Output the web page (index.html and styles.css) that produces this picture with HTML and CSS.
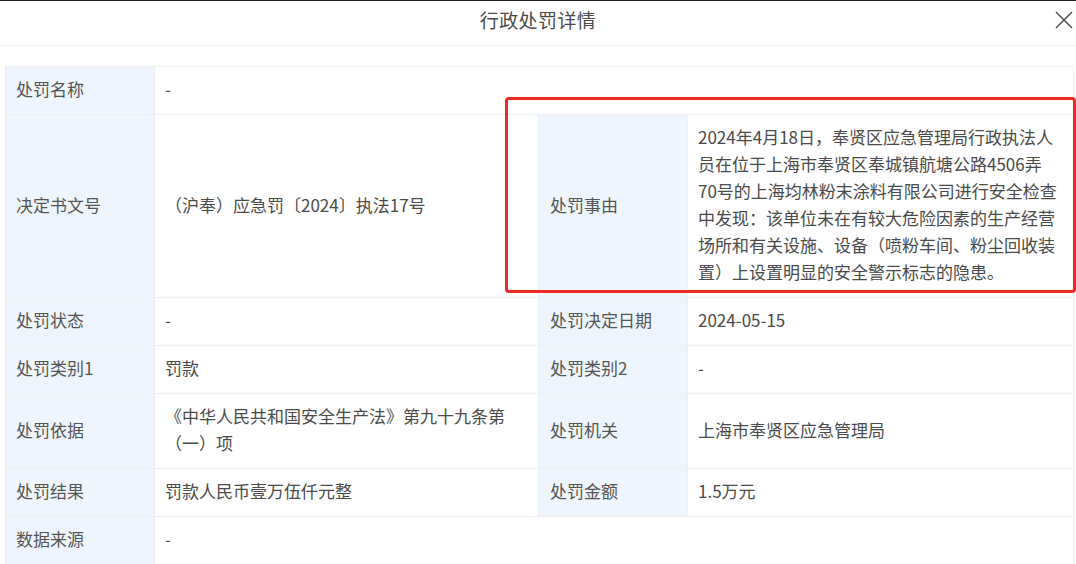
FILE: index.html
```html
<!DOCTYPE html>
<html lang="zh-CN">
<head>
  <meta charset="UTF-8" />
  <title>行政处罚详情</title>
  <meta name="viewport" content="width=device-width, initial-scale=1" />
  <link rel="stylesheet" href="styles.css">
</head>
<body>

  <div class="dialog" role="dialog" aria-label="行政处罚详情">
    <header class="dialog-header">
      <h2 class="dialog-title">行政处罚详情</h2>
      <button class="dialog-close" type="button" aria-label="关闭">
        <svg width="18" height="18" viewBox="0 0 18 18" aria-hidden="true">
          <path d="M1 1 L17 17 M17 1 L1 17" stroke="#555" stroke-width="1.6" fill="none" />
        </svg>
      </button>
    </header>

    <main class="dialog-body">
      <table class="detail">
        <colgroup>
          <col class="col-label" />
          <col class="col-value" />
          <col class="col-label" />
          <col class="col-value-wide" />
        </colgroup>
        <tbody>
          <tr>
            <th>处罚名称</th>
            <td colspan="3">-</td>
          </tr>
          <tr>
            <th>决定书文号</th>
            <td>（沪奉）应急罚〔2024〕执法17号</td>
            <th class="th-right">处罚事由</th>
            <td class="td-reason">2024年4月18日，奉贤区应急管理局行政执法人员在位于上海市奉贤区奉城镇航塘公路4506弄70号的上海均林粉末涂料有限公司进行安全检查中发现：该单位未在有较大危险因素的生产经营场所和有关设施、设备（喷粉车间、粉尘回收装置）上设置明显的安全警示标志的隐患。</td>
          </tr>
          <tr>
            <th>处罚状态</th>
            <td>-</td>
            <th class="th-right">处罚决定日期</th>
            <td>2024-05-15</td>
          </tr>
          <tr>
            <th>处罚类别1</th>
            <td>罚款</td>
            <th class="th-right">处罚类别2</th>
            <td>-</td>
          </tr>
          <tr>
            <th>处罚依据</th>
            <td>《中华人民共和国安全生产法》第九十九条第（一）项</td>
            <th class="th-right">处罚机关</th>
            <td>上海市奉贤区应急管理局</td>
          </tr>
          <tr>
            <th>处罚结果</th>
            <td>罚款人民币壹万伍仟元整</td>
            <th class="th-right">处罚金额</th>
            <td>1.5万元</td>
          </tr>
          <tr>
            <th>数据来源</th>
            <td colspan="3">-</td>
          </tr>
        </tbody>
      </table>

      <!-- 标注框 -->
      <div class="highlight" aria-hidden="true"></div>
    </main>
  </div>

</body>
</html>
```

FILE: styles.css
```css
/* Reset básico */
* {
  box-sizing: border-box;
  margin: 0;
  padding: 0;
  font-family: "Noto Sans CJK SC", "Noto Sans", sans-serif;
}

body {
  width: 1076px;
  height: 564px;
  overflow: hidden;
  background: #fff;
  color: #444;
  border-top: 1px solid #222;
}

/* Cabecera */
.dialog-header {
  height: 45px;
  border-bottom: 1px solid #eeeff2;
  display: flex;
  align-items: center;
  justify-content: center;
  position: relative;
}

.dialog-title {
  font-size: 19px;
  font-weight: 400;
  color: #4a4a4a;
  letter-spacing: 0.02em;
  margin-top: -7px;
}

.dialog-close {
  position: absolute;
  right: 2px;
  top: 9px;
  width: 20px;
  height: 20px;
  border: none;
  background: none;
  display: flex;
  align-items: center;
  justify-content: center;
  cursor: pointer;
}

/* Cuerpo */
.dialog-body {
  position: relative;
  padding: 20px 3px 0 5px;
}

.detail {
  width: 1068px;
  table-layout: fixed;
  border-collapse: collapse;
  border: 1px solid #eceff3;
  font-size: 17px;
  line-height: 27px;
}

.col-label { width: 149px; }
.col-value { width: 384px; }
.col-value-wide { width: 386px; }

.detail th,
.detail td {
  border: 1px solid #eceff3;
  padding: 8px 10px 12px;
  text-align: left;
  vertical-align: middle;
  font-weight: 400;
}

.detail th {
  background: #eef5fc;
  color: #555;
}

.detail th.th-right {
  padding-left: 11px;
}

.detail td {
  color: #4a4a4a;
  background: #fff;
}

.detail td.td-reason {
  padding-right: 16px;
}

/* Marco rojo */
.highlight {
  position: absolute;
  left: 505px;
  top: 51px;
  width: 571px;
  height: 196px;
  border: 3px solid #ee2a24;
  border-radius: 4px;
  pointer-events: none;
}
```
